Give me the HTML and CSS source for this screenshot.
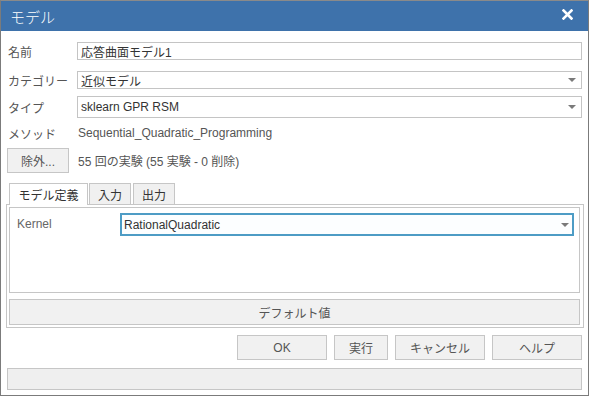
FILE: index.html
```html
<!DOCTYPE html>
<html lang="ja">
<head>
<meta charset="utf-8">
<title>モデル</title>
<link rel="stylesheet" href="styles.css">
</head>
<body>
<div class="window">
  <div class="titlebar">
    <span class="title">モデル</span>
    <svg class="close" width="11" height="11" viewBox="0 0 11 11"><path d="M1.5 1.5 L9.5 9.5 M9.5 1.5 L1.5 9.5" stroke="#fff" stroke-width="2.6" stroke-linecap="square"/></svg>
  </div>
  <div class="content">
    <div class="row r-name">
      <span class="label">名前</span>
      <div class="field">応答曲面モデル1</div>
    </div>
    <div class="row r-cat">
      <span class="label">カテゴリー</span>
      <div class="field select">近似モデル<span class="arrow"></span></div>
    </div>
    <div class="row r-type">
      <span class="label">タイプ</span>
      <div class="field select">sklearn GPR RSM<span class="arrow"></span></div>
    </div>
    <div class="row r-method">
      <span class="label">メソッド</span>
      <span class="value">Sequential_Quadratic_Programming</span>
    </div>
    <div class="row r-exclude">
      <button class="btn btn-exclude">除外...</button>
      <span class="value">55 回の実験 (55 実験 - 0 削除)</span>
    </div>
    <div class="tabs">
      <div class="tab active">モデル定義</div>
      <div class="tab t2">入力</div>
      <div class="tab t3">出力</div>
    </div>
    <div class="panel">
      <div class="inner">
        <span class="klabel">Kernel</span>
        <div class="field select kernel">RationalQuadratic<span class="arrow"></span></div>
      </div>
      <button class="btn btn-default">デフォルト値</button>
    </div>
    <div class="actions">
      <button class="btn b-ok">OK</button>
      <button class="btn b-run">実行</button>
      <button class="btn b-cancel">キャンセル</button>
      <button class="btn b-help">ヘルプ</button>
    </div>
    <div class="status"></div>
  </div>
</div>
</body>
</html>
```

FILE: styles.css
```css
* { box-sizing: border-box; }
html, body { margin: 0; padding: 0; background: #fff; }
body {
  font-family: "Liberation Sans", "Noto Sans CJK JP", sans-serif;
  font-size: 12px;
  color: #555;
}
.window {
  width: 589px;
  height: 396px;
  border: 1px solid #7b7b7b;
  border-top-color: #8a8a8a;
  background: #fff;
  display: flex;
  flex-direction: column;
}
.titlebar {
  height: 30px;
  background: #3e72ab;
  display: flex;
  align-items: center;
  justify-content: space-between;
  padding: 0 15px 0 9px;
  flex: none;
}
.title {
  color: #fff;
  font-size: 15px;
  font-weight: 300;
}
.close { display: block; margin-top: -3px; }
.content {
  flex: 1;
  display: flex;
  flex-direction: column;
  padding: 0 4px 0 5px;
}
.row {
  display: flex;
  align-items: center;
  padding: 0 2px;
  flex: none;
}
.label { width: 69px; color: #555; white-space: nowrap; }
.value { color: #555; }
.r-name { margin-top: 11px; height: 18px; }
.r-cat { margin-top: 11px; height: 18px; }
.r-type { margin-top: 7px; height: 22px; }
.r-method { margin-top: 6px; height: 18px; }
.r-method .value { margin-left: 1px; }
.r-exclude { margin-top: 6px; height: 25px; padding-left: 1px; }
.r-exclude .value { margin-left: 9px; }
.field {
  flex: 1;
  height: 100%;
  border: 1px solid #c4c4c4;
  background: #fff;
  color: #333;
  padding: 0 3px;
  display: flex;
  align-items: center;
  position: relative;
}
.select .arrow {
  position: absolute;
  right: 5px;
  top: 50%;
  margin-top: -2px;
  width: 0;
  height: 0;
  border-left: 4px solid transparent;
  border-right: 4px solid transparent;
  border-top: 4px solid #7a7a7a;
}
.btn {
  font-family: inherit;
  font-size: 12px;
  color: #555;
  background: #f1f1f1;
  border: 1px solid #c6c6c6;
  padding: 0;
  margin: 0;
}
.btn-exclude { width: 62px; height: 25px; }
.tabs {
  display: flex;
  margin-top: 10px;
  padding-left: 3px;
  height: 21px;
  flex: none;
  position: relative;
  z-index: 1;
}
.tab {
  height: 21px;
  border: 1px solid #c6c6c6;
  border-bottom: none;
  background: #f0f0f0;
  color: #333;
  display: flex;
  align-items: center;
  justify-content: center;
}
.tab.active { width: 79px; background: #fff; height: 22px; }
.tab.t2 { width: 42px; margin-left: 1px; }
.tab.t3 { width: 42px; margin-left: 2px; }
.panel {
  border: 1px solid #c6c6c6;
  height: 124px;
  padding: 2px 3px 2px 2px;
  display: flex;
  flex-direction: column;
  flex: none;
}
.inner {
  border: 1px solid #c6c6c6;
  height: 86px;
  padding: 5px 5px 0 7px;
  display: flex;
  align-items: flex-start;
  flex: none;
}
.klabel { width: 103px; height: 23px; line-height: 23px; color: #666; }
.field.kernel {
  flex: 1;
  height: 23px;
  border: 2px solid #4d9cc5;
  background: #fcfeff;
  padding: 0 2px;
}
.kernel .arrow { right: 3px; }
.btn-default { margin-top: 6px; height: 26px; width: 100%; color: #555; }
.actions {
  display: flex;
  justify-content: flex-end;
  gap: 7px;
  margin-top: 7px;
  margin-right: 2px;
  flex: none;
}
.actions .btn { height: 25px; }
.b-ok { width: 90px; }
.b-run { width: 54px; }
.b-cancel { width: 90px; }
.b-help { width: 90px; }
.status {
  margin: 8px 2px 0 1px;
  height: 22px;
  background: #efefef;
  border: 1px solid #c6c6c6;
  flex: none;
}
```
